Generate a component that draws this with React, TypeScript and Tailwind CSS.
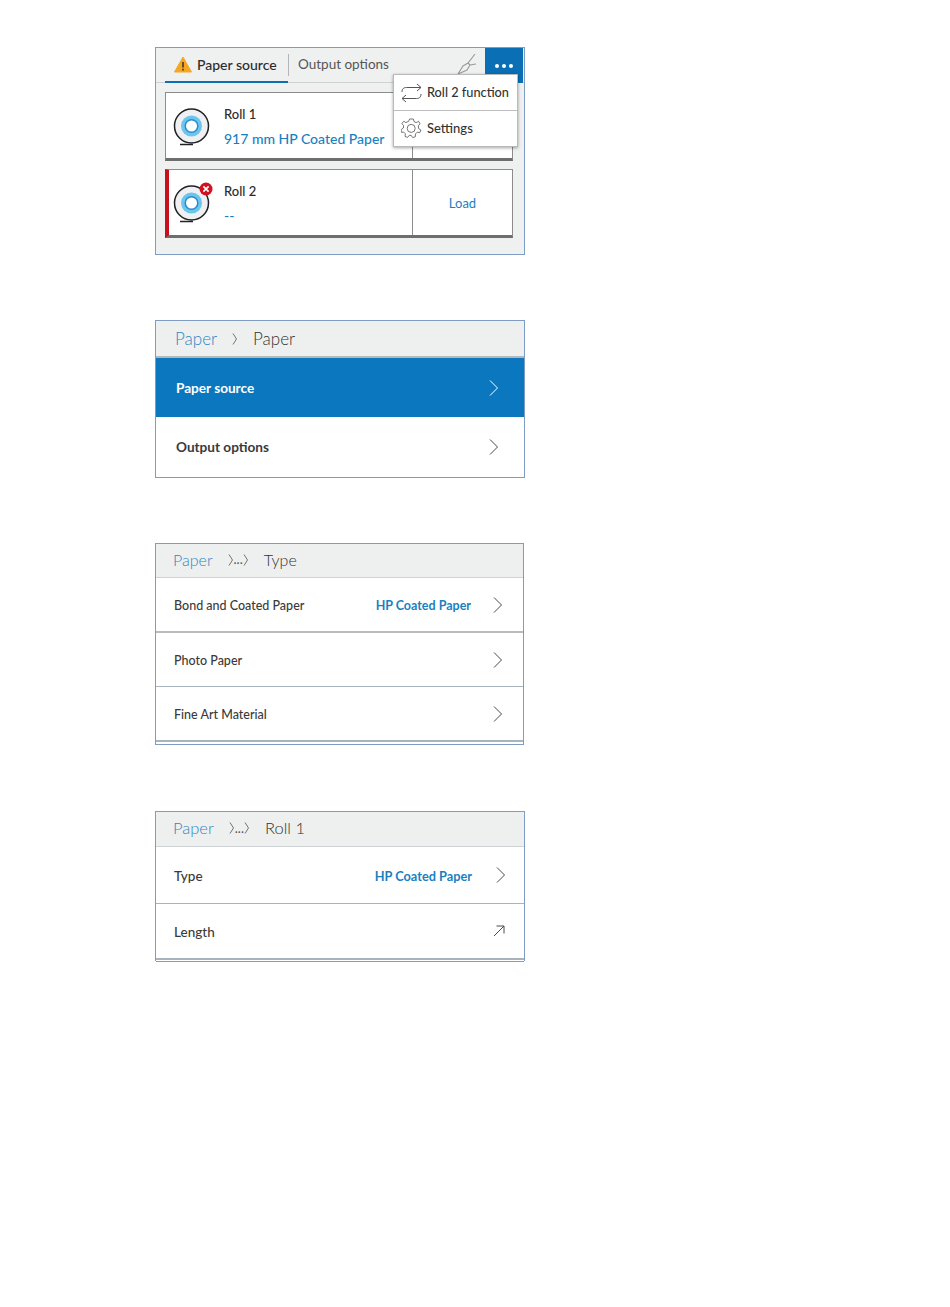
import { ReactNode } from 'react'

const font = { fontFamily: 'Lato, "Noto Sans", sans-serif' }

function Chevron({ className = 'text-[#4a4a4a]' }: { className?: string }) {
  return (
    <svg width="12" height="18" viewBox="0 0 12 18" fill="none" className={className}>
      <path d="M2 1.5 L9.5 9 L2 16.5" stroke="currentColor" strokeWidth="1" />
    </svg>
  )
}

function TinyChevron() {
  return (
    <svg width="6" height="14" viewBox="0 0 6 14" fill="none" className="shrink-0">
      <path d="M1 1.5 L4.5 7 L1 12.5" stroke="#666" strokeWidth="0.9" />
    </svg>
  )
}

function RollIcon({ error }: { error?: boolean }) {
  return (
    <div className="relative mt-[2px] h-[40px] w-[40px] shrink-0">
      <svg width="40" height="40" viewBox="0 0 40 40" fill="none">
        <circle cx="19.5" cy="19" r="17" fill="#eef0f4" stroke="#222" strokeWidth="1.5" />
        <path d="M8 37.5 H21" stroke="#222" strokeWidth="1.5" />
        <circle cx="19.5" cy="19" r="10.5" fill="#6cc5ec" />
        <circle cx="19.5" cy="19" r="7" fill="#2a8ccb" />
        <circle cx="19.5" cy="19" r="5.5" fill="#fff" />
      </svg>
      {error ? (
        <svg width="14" height="14" viewBox="0 0 14 14" className="absolute right-[-1px] top-[-2px]">
          <circle cx="7" cy="7" r="6.5" fill="#d0121f" />
          <path d="M4.4 4.4 L9.6 9.6 M9.6 4.4 L4.4 9.6" stroke="#fff" strokeWidth="1.6" />
        </svg>
      ) : null}
    </div>
  )
}

function RollCard({
  name,
  value,
  action,
  error
}: {
  name: string
  value: string
  action: string
  error?: boolean
}) {
  return (
    <div
      className={`flex h-[69px] border border-b-[3px] border-[#8c8c8c] border-b-[#6e6e6e] bg-white ${
        error ? 'border-l-[4px] border-l-[#c8101c]' : ''
      }`}
    >
      <div className={`flex flex-1 items-center ${error ? 'pl-[3px]' : 'pl-[6px]'}`}>
        <RollIcon error={error} />
        <div className="ml-[12px] pt-[2px]">
          <div className="text-[13px] font-medium leading-[16px] text-[#2b2b2b]">{name}</div>
          <div className="mt-[8px] text-[14px] font-medium leading-[18px] text-[#1a7fc0]">{value}</div>
        </div>
      </div>
      <div className="flex w-[100px] items-center justify-center border-l border-[#8c8c8c] pt-[3px] text-[13px] text-[#1a7fc0]">
        {action}
      </div>
    </div>
  )
}

function Crumb({
  current,
  size,
  deep,
  gap
}: {
  current: string
  size: string
  deep?: boolean
  gap: string
}) {
  return (
    <>
      <span className={`${size} text-[#2f86c4]`}>Paper</span>
      <span className="ml-[15px] flex items-center text-[13px] text-[#555]">
        <TinyChevron />
        {deep ? (
          <>
            <span className="leading-none">...</span>
            <TinyChevron />
          </>
        ) : null}
      </span>
      <span className={`${gap} ${size} text-[#333]`}>{current}</span>
    </>
  )
}

function Row({
  label,
  value,
  icon,
  h,
  big,
  border = 'border-b border-[#a9b3bd]'
}: {
  label: string
  value?: string
  icon?: ReactNode
  h: string
  big?: boolean
  border?: string
}) {
  return (
    <div className={`flex items-center pl-[18px] pr-[19px] ${h} ${border}`}>
      <span className={`pt-[3px] font-medium text-[#3a3a3a] ${big ? 'text-[13.5px]' : 'text-[12.5px]'}`}>{label}</span>
      <span className={`ml-auto mr-[21px] pt-[3px] font-bold text-[#1a7fc0] ${big ? 'text-[12.75px]' : 'text-[12.5px]'}`}>
        {value}
      </span>
      {icon ?? <Chevron />}
    </div>
  )
}

export default function App() {
  return (
    <div className="min-h-[1307px] bg-white pl-[155px] pt-[47px]" style={font}>
      {/* roll status panel */}
      <section className="relative h-[208px] w-[370px] border border-[#7f9cc4] bg-[#eff0f0]">
        <div className="flex h-[35px] border-b border-[#cfd1d2]">
          <div className="ml-[9px] flex h-[35px] w-[123px] items-center gap-[5px] border-b-[2px] border-[#0a6fb5] pl-[9px]">
            <svg width="18" height="17" viewBox="0 0 18 17">
              <path d="M9 1 L17.5 16 H0.5 Z" fill="#f5a623" stroke="#f5a623" strokeLinejoin="round" />
              <path d="M9 6 V11.5 M9 12.8 V14.4" stroke="#2a2a2a" strokeWidth="1.4" />
            </svg>
            <span className="text-[14px] font-medium text-[#2b2b2b]">Paper source</span>
          </div>
          <div className="mt-[6px] h-[22px] border-l border-[#b5b5b5]" />
          <span className="ml-[9px] mt-[6px] text-[13.5px] text-[#555]">Output options</span>
          <svg width="24" height="24" viewBox="0 0 24 24" fill="none" className="ml-auto mr-[6px] mt-[4px]">
            <path d="M20 2 L13 11 L8 14 L3 22 L12 18 L15 13 L21 12 M13 11 L15 13 M3 22 L8 14" stroke="#9a9a9a" strokeWidth="1.1" />
          </svg>
          <div className="mr-[1px] flex h-[35px] w-[38px] items-center justify-center gap-[3px] bg-[#0a6fb5]">
            <i className="h-[4px] w-[4px] rounded-full bg-white" />
            <i className="h-[4px] w-[4px] rounded-full bg-white" />
            <i className="h-[4px] w-[4px] rounded-full bg-white" />
          </div>
        </div>
        <div className="flex flex-col gap-[8px] pl-[9px] pr-[11px] pt-[9px]">
          <RollCard name="Roll 1" value="917 mm HP Coated Paper" action="" />
          <RollCard name="Roll 2" value="--" action="Load" error />
        </div>

        {/* overflow menu */}
        <div className="absolute left-[237px] top-[26px] w-[125px] border border-[#b9b9b9] bg-white shadow-[0_1px_3px_rgba(0,0,0,0.35)]">
          <div className="flex h-[36px] items-center gap-[5px] border-b border-[#bdbdbd] pl-[7px]">
            <svg width="21" height="20" viewBox="0 0 21 20" fill="none" stroke="#555" strokeWidth="1">
              <path d="M1 9 C1 5.5 3 4.5 5.5 4.5 H20 M16 1 L20 4.5 L16 8" />
              <path d="M20 11 C20 14.5 18 15.5 15.5 15.5 H1 M5 12 L1 15.5 L5 19" />
            </svg>
            <span className="text-[12.75px] font-medium text-[#333]">Roll 2 function</span>
          </div>
          <div className="flex h-[35px] items-center gap-[5px] pl-[7px]">
            <svg width="21" height="21" viewBox="0 0 21 21" fill="none" stroke="#666" strokeWidth="0.9">
              <path d="M8.6 1 H12.4 L13 3.6 L15.2 4.6 L17.6 3.3 L19 5.8 L17.3 7.8 L17.6 10.5 L19.9 12 L18.8 14.6 L16.2 14.2 L14.4 16 L14.4 18.7 L11.7 19.6 L10.2 17.4 H8.2 L6.6 19.4 L4 18.4 L4.4 15.8 L2.8 14.1 L0.3 14.3 L0.2 11.5 L2.4 10 L2.6 7.6 L0.9 5.6 L2.6 3.3 L4.9 4.5 L7.6 3.4 Z" />
              <circle cx="10.2" cy="10.4" r="4" />
            </svg>
            <span className="text-[13px] font-medium text-[#333]">Settings</span>
          </div>
        </div>
      </section>

      {/* paper menu */}
      <section className="mt-[65px] h-[158px] w-[370px] border border-[#7f9cc4]">
        <div className="flex h-[37px] items-center border-b-[2px] border-[#b5b8ba] bg-[#eeefef] pl-[19px]">
          <Crumb current="Paper" size="text-[17px] font-light" gap="ml-[15px]" />
        </div>
        <div className="flex h-[59px] items-center justify-between bg-[#0b77bf] pl-[20px] pr-[24px]">
          <span className="pt-[2px] text-[13.6px] font-bold text-white">Paper source</span>
          <Chevron className="text-white" />
        </div>
        <div className="flex h-[59px] items-center justify-between pl-[20px] pr-[24px]">
          <span className="pt-[2px] text-[13.6px] font-bold text-[#3a3a3a]">Output options</span>
          <Chevron />
        </div>
      </section>

      {/* type list */}
      <section className="mt-[65px] h-[202px] w-[369px] border-x border-t border-[#7f9cc4]">
        <div className="flex h-[34px] items-center border-b border-[#cfd3d6] bg-[#eeefef] pb-[2px] pl-[17px]">
          <Crumb current="Type" size="text-[16px] font-light" deep gap="ml-[15px]" />
        </div>
        <Row label="Bond and Coated Paper" value="HP Coated Paper" h="h-[55px]" border="border-b-[2px] border-[#b9bcbe]" />
        <Row label="Photo Paper" h="h-[54px]" />
        <Row label="Fine Art Material" h="h-[55px]" border="border-b-[2px] border-[#a9b3bd]" />
        <div className="h-[2px]" />
        <div className="border-b border-[#7f9cc4]" />
      </section>

      {/* roll 1 */}
      <section className="mt-[66px] h-[150px] w-[370px] border-x border-t border-[#7f9cc4]">
        <div className="flex h-[35px] items-center border-b border-[#cfd3d6] bg-[#eeefef] pb-[2px] pl-[17px]">
          <Crumb current="Roll 1" size="text-[16.5px] font-light" deep gap="ml-[15px]" />
        </div>
        <Row
          label="Type"
          value="HP Coated Paper"
          h="h-[57px]"
          big
          icon={<Chevron className="translate-x-[2px] text-[#4a4a4a]" />}
        />
        <Row
          label="Length"
          h="h-[56px]"
          big
          border="border-b-[2px] border-[#a9b3bd]"
          icon={
            <svg width="12" height="12" viewBox="0 0 12 12" fill="none" stroke="#4a4a4a" strokeWidth="1">
              <path d="M1 11 L11 1 M3.5 1 H11 V8.5" />
            </svg>
          }
        />
        <div className="mt-[1px] border-b border-[#7f9cc4]" />
      </section>
    </div>
  )
}
